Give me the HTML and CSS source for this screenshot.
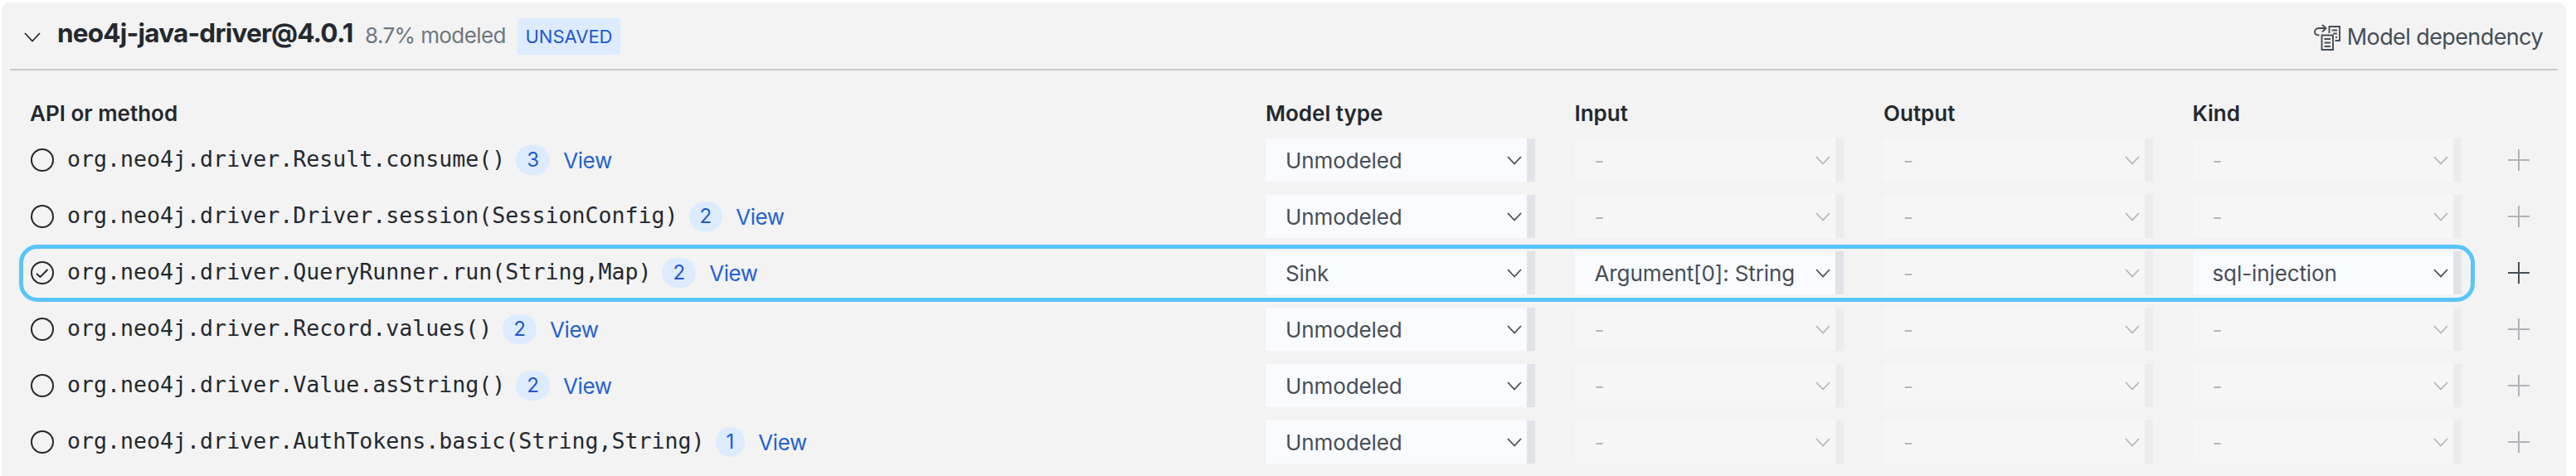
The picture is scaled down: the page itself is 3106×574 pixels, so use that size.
FILE: index.html
```
<!DOCTYPE html>
<html lang="en">
<head>
<meta charset="utf-8">
<title>Model editor</title>
<link rel="stylesheet" href="styles.css">
</head>
<body>
<main class="panel">
  <header class="head">
    <svg class="fold" viewBox="0 0 20 12"><path d="M1 1l9 9.5L19 1"/></svg>
    <h1 class="title">neo4j-java-driver@4.0.1</h1>
    <span class="percent">8.7% modeled</span>
    <span class="tag">UNSAVED</span>
    <button class="dep">
      <svg class="dep-icon" viewBox="0 0 32 32"><path d="M6.500 13.500C2.500 13.500 1 11.500 1 9.500S2.500 5 6.500 5H14M10 1l4.500 4-4.500 4.500M18.500 11V3H31v17h-5.500M21.500 7.500H28M23.500 11.500H28M26 16H28M9.500 13.500h13.500v17.500H9.500zM12.500 18h7.500M12.500 22.500h7.500M12.500 27h7.500"/></svg>
      <span class="dep-text">Model dependency</span>
    </button>
  </header>
  <section class="grid" id="grid">
    <div class="row labels"><b>API or method</b><b>Model type</b><b>Input</b><b>Output</b><b>Kind</b></div>
  </section>
</main>
<script src="rows.js"></script>
</body>
</html>
```
FILE: styles.css
```
*, *::after { box-sizing: border-box; }
body { margin: 0; background: #fff; font-family: Inter, "Liberation Sans", sans-serif; color: #24292f; overflow: hidden; }
svg { display: block; fill: none; stroke: currentColor; flex: none; }
.panel { margin: 3px 12px 0 2px; height: 571px; background: #f3f3f3; border-radius: 10px 10px 0 0; padding: 0 10px; }
.head { height: 82px; border-bottom: 2px solid #c8c8c8; display: flex; align-items: center; padding: 0 18px 5px 17px; }
.fold { width: 20px; height: 12px; stroke-width: 1.8; margin-top: 8px; }
.title { margin: -1px 0 0 20px; width: 371px; font-size: 31.5px; letter-spacing: -.8px; font-weight: 700; line-height: 40px; white-space: nowrap; }
.percent { width: 184px; font-size: 26px; letter-spacing: -.6px; line-height: 40px; color: #6e7781; white-space: nowrap; margin-top: 4px; }
.tag { width: 124px; height: 44px; line-height: 45px; border-radius: 4px; background: #ddebff; color: #2158cc; font-size: 22px; text-align: center; margin-top: 7px; }
.dep { margin: 9px 0 0 auto; padding: 0; border: 0; background: none; color: #464e58; font: 27px/40px Inter, sans-serif; letter-spacing: -.6px; display: flex; align-items: center; gap: 8px; }
.dep-icon { width: 32px; height: 32px; stroke-width: 1.9; }
.grid { padding-top: 32px; }
.row { display: grid; grid-template-columns: 1452px 324.5px 324.5px 324.5px 324.5px 44px; column-gap: 48px; height: 68px; align-items: center; padding-left: 14px; position: relative; }
.labels { height: 42px; font-size: 26px; }
.labels b { font-weight: 600; line-height: 40px; margin-top: -2px; }
.labels b:first-child { padding-left: 10px; }
.api { display: flex; align-items: center; padding-left: 11px; white-space: nowrap; }
.state { width: 28px; height: 28px; stroke-width: 2; margin-right: 16px; }
.name { font-family: "DejaVu Sans Mono", monospace; font-size: 26.6px; line-height: 36px; margin-top: -2px; }
.count { height: 36px; line-height: 36px; border-radius: 18px; padding: 0 13px; margin-left: 13px; background: #ddebff; color: #2158cc; font-size: 24px; }
.view { margin-left: 16px; color: #2562d1; font-size: 26px; letter-spacing: -.4px; line-height: 36px; margin-top: 1px; }
.select { height: 52px; background: #fafbfe; border-right: 10px solid #e1e3e8; color: #464e58; display: flex; align-items: center; justify-content: space-between; padding: 0 6px 0 24px; font-size: 26px; letter-spacing: -.1px; white-space: nowrap; }
.select.off { background: #f6f6f6; border-color: #ebecee; color: #b3b6ba; }
.arrow { width: 18px; height: 11px; stroke-width: 1.8; }
.plus { width: 26px; height: 26px; stroke-width: 2; color: #464e58; justify-self: center; margin-right: 2px; }
.plus.off { color: #b0b3b8; }
.current::after { content: ""; position: absolute; left: 11px; top: 0; width: 2961px; height: 69px; border: 5px solid #5ac5fa; border-radius: 22px; pointer-events: none; z-index: 1; }
```
FILE: rows.js
```
const rows = [
  ["org.neo4j.driver.Result.consume()", 3],
  ["org.neo4j.driver.Driver.session(SessionConfig)", 2],
  ["org.neo4j.driver.QueryRunner.run(String,Map)", 2, ["Sink", "Argument[0]: String", "-", "sql-injection"]],
  ["org.neo4j.driver.Record.values()", 2],
  ["org.neo4j.driver.Value.asString()", 2],
  ["org.neo4j.driver.AuthTokens.basic(String,String)", 1]
];
const select = (text) => `<div class="select${text === "-" ? " off" : ""}"><span>${text}</span><svg class="arrow" viewBox="0 0 18 11"><path d="M1 1l8 8.500L17 1"/></svg></div>`;
document.getElementById("grid").insertAdjacentHTML("beforeend", rows.map(([name, count, values]) => `
<div class="row${values ? " current" : ""}">
  <div class="api">
    <svg class="state" viewBox="0 0 28 28"><circle cx="14" cy="14" r="13"/>${values ? '<path d="M7 15l4.500 4L20.500 10"/>' : ""}</svg>
    <span class="name">${name}</span><span class="count">${count}</span><a class="view">View</a>
  </div>
  ${(values || ["Unmodeled", "-", "-", "-"]).map(select).join("")}
  <svg class="plus${values ? "" : " off"}" viewBox="0 0 26 26"><path d="M13 0v26M0 13h26"/></svg>
</div>`).join(""));
```
